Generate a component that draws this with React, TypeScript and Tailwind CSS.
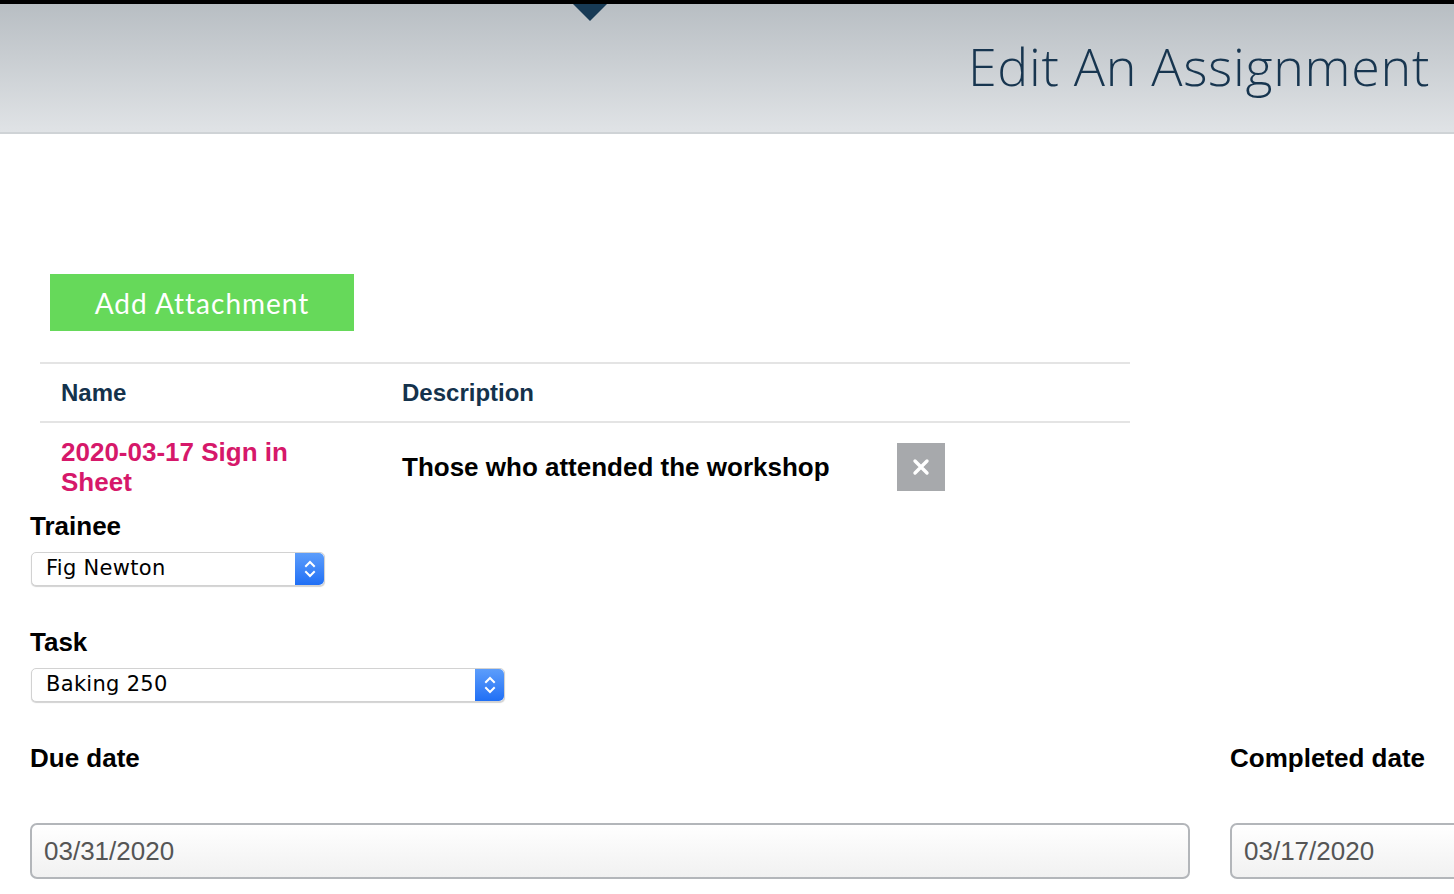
import React from 'react';

const sans = { fontFamily: '"Liberation Sans", Arial, sans-serif' };

const Stepper = () => (
  <div className="w-[29px] h-full rounded-r-[5px] bg-gradient-to-b from-[#5c9dfb] to-[#1f6ff5] flex items-center justify-center">
    <svg width="12" height="20" viewBox="0 0 12 20" fill="none" stroke="white" strokeWidth={2} strokeLinecap="square">
      <path d="M2 7l4-4 4 4" />
      <path d="M2 13l4 4 4-4" />
    </svg>
  </div>
);

const FakeSelect = ({ value, width }: { value: string; width: string }) => (
  <div className={`${width} h-[34px] flex items-stretch rounded-[5px] bg-white border border-[#d2d2d2] shadow-[0_1px_1px_rgba(0,0,0,0.18)]`}>
    <div className="flex-1 flex items-center pl-[14px] text-[21px] text-black tracking-[0.3px]" style={{ fontFamily: '"DejaVu Sans", "Liberation Sans", sans-serif' }}>
      {value}
    </div>
    <Stepper />
  </div>
);

const DateInput = ({ value }: { value: string }) => (
  <div className="w-[1160px] h-[56px] shrink-0 flex items-center pl-[12px] rounded-[7px] border-2 border-[#b3b6ba] bg-gradient-to-b from-white to-[#f1f1f1] text-[26px] text-[#555]">
    {value}
  </div>
);

export default function App() {
  return (
    <div className="h-screen w-full overflow-hidden bg-white" style={sans}>
      {/* Header */}
      <header className="relative h-[134px] border-t-[4px] border-black border-b-2 border-b-[#cfd3d6] bg-gradient-to-b from-[#b8bec3] to-[#e0e3e6] flex items-center justify-end pr-[24px]">
        <div className="absolute left-[573px] top-0 w-0 h-0 border-l-[17px] border-r-[17px] border-t-[17px] border-l-transparent border-r-transparent border-t-[#173a55]" />
        <h1 className="text-[#17354f] text-[52px] font-light tracking-[0.7px] mb-[4px]" style={{ fontFamily: '"Open Sans", sans-serif' }}>
          Edit An Assignment
        </h1>
      </header>

      <div className="pt-[140px]">
        <div className="pl-[50px]">
          <button className="w-[304px] h-[57px] bg-[#66d95a] text-white text-[28px] font-normal tracking-[1px]" style={{ fontFamily: 'Lato, "Open Sans", sans-serif' }}>
            Add Attachment
          </button>
        </div>

        <table className="ml-[40px] mt-[31px] w-[1090px] border-collapse text-left">
          <thead>
            <tr className="border-t-2 border-b-2 border-[#e4e4e4] h-[59px] text-[#14324c] text-[24px] font-bold">
              <th className="w-[341px] pl-[21px] align-middle">Name</th>
              <th className="w-[496px] pl-[21px] align-middle">Description</th>
              <th />
            </tr>
          </thead>
          <tbody>
            <tr className="text-[26px] font-bold leading-[30px]">
              <td className="pl-[21px] pr-[20px] py-[14px] text-[#d6186a] align-middle">2020-03-17 Sign in Sheet</td>
              <td className="pl-[21px] align-middle text-black">Those who attended the workshop</td>
              <td className="pl-[20px] align-middle">
                <button className="w-[48px] h-[48px] bg-[#a7a9ac] flex items-center justify-center">
                  <svg width="18" height="18" viewBox="0 0 18 18" stroke="white" strokeWidth={3.4} strokeLinecap="round">
                    <path d="M3 3l12 12M15 3L3 15" />
                  </svg>
                </button>
              </td>
            </tr>
          </tbody>
        </table>

        <div className="pl-[30px]">
          <div className="text-[26px] font-bold text-black leading-[30px]">Trainee</div>
          <div className="mt-[11px] pl-[1px]">
            <FakeSelect value="Fig Newton" width="w-[294px]" />
          </div>

          <div className="text-[26px] font-bold text-black leading-[30px] mt-[41px]">Task</div>
          <div className="mt-[11px] pl-[1px]">
            <FakeSelect value="Baking 250" width="w-[474px]" />
          </div>

          <div className="flex gap-[40px] mt-[41px]">
            <div className="shrink-0">
              <div className="text-[26px] font-bold text-black leading-[30px]">Due date</div>
              <div className="mt-[50px]">
                <DateInput value="03/31/2020" />
              </div>
            </div>
            <div className="shrink-0">
              <div className="text-[26px] font-bold text-black leading-[30px]">Completed date</div>
              <div className="mt-[50px]">
                <DateInput value="03/17/2020" />
              </div>
            </div>
          </div>
        </div>
      </div>
    </div>
  );
}
